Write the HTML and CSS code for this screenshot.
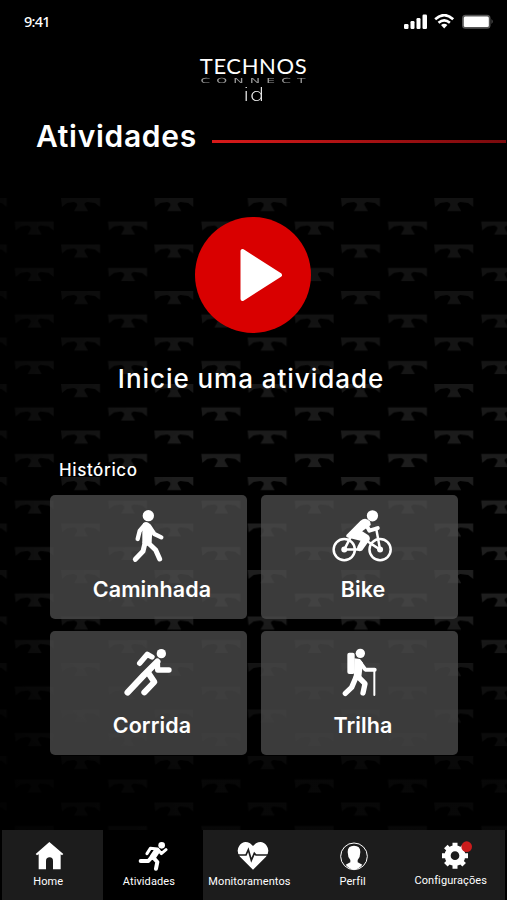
FILE: index.html
```html
<!DOCTYPE html>
<html lang="pt-BR">
<head>
    <meta charset="UTF-8">
    <title>Technos Connect ID - Atividades</title>
    <link rel="stylesheet" href="styles.css">
</head>
<body>
    <svg class="fundo" width="507" height="900" aria-hidden="true">
        <defs>
            <linearGradient id="fade" x1="0" y1="0" x2="0" y2="1">
                <stop offset="0.2" stop-color="#fff" stop-opacity="0.6"/>
                <stop offset="0.45" stop-color="#fff" stop-opacity="1"/>
                <stop offset="0.65" stop-color="#fff" stop-opacity="1"/>
                <stop offset="0.78" stop-color="#fff" stop-opacity="0.5"/>
                <stop offset="0.92" stop-color="#fff" stop-opacity="0.25"/>
            </linearGradient>
            <linearGradient id="lado">
                <stop offset="0" stop-color="#000" stop-opacity="0.6"/>
                <stop offset="0.35" stop-color="#000" stop-opacity="0"/>
            </linearGradient>
            <mask id="mascara">
                <rect y="190" width="507" height="640" fill="url(#fade)"/>
                <rect width="507" height="900" fill="url(#lado)"/>
            </mask>
            <pattern id="logos" x="61" y="197" width="93.3" height="46.5" patternUnits="userSpaceOnUse">
                <path d="M0 1H39V10L34 6L26 5Q22 6 24 9L27 14H13L16 9Q17 6 13 5L6 6L1 10Z" fill="#1e1e1e"/>
                <path transform="translate(47 23.5)" d="M0 1H39V10L34 6L26 5Q22 6 24 9L27 14H13L16 9Q17 6 13 5L6 6L1 10Z" fill="#1e1e1e"/>
            </pattern>
        </defs>
        <rect y="190" width="507" height="640" fill="url(#logos)" mask="url(#mascara)"/>
    </svg>

    <div class="app">
        <div class="status">
            <span class="hora">9:41</span>
            <svg width="90" height="18" viewBox="0 0 90 18" fill="#fff">
                <rect x="0" y="10" width="4.5" height="5" rx="1.2"/>
                <rect x="6.5" y="7" width="4" height="8" rx="1.2"/>
                <rect x="12.5" y="4" width="4" height="11" rx="1.2"/>
                <rect x="18.5" y="0.5" width="4.5" height="14.5" rx="1.2"/>
                <g fill="none" stroke="#fff" stroke-width="2.7">
                    <path d="M31.2 5.2Q40.2 -2.8 49.2 5.2"/>
                    <path d="M34.5 8.7Q40.2 4 45.9 8.7"/>
                </g>
                <path d="M37 11Q40.2 8.5 43.4 11L40.2 14.5Z"/>
                <rect x="58" y="0.7" width="28.5" height="14" rx="3.5" fill="#555"/>
                <rect x="59.8" y="2.5" width="25" height="10.5" rx="1.5"/>
                <path d="M87.5 5Q90 7.5 87.5 10Z" fill="#555"/>
            </svg>
        </div>

        <div class="logo">
            <span class="technos">TECHNOS</span>
            <span class="connect">CONNECT</span>
            <span class="id">id</span>
        </div>

        <div class="titulo">
            <h1>Atividades</h1>
            <div class="linha"></div>
        </div>

        <button class="play" aria-label="Iniciar">
            <svg width="117" height="117" viewBox="0 0 117 117">
                <circle cx="58" cy="58" r="58" fill="#d90000"/>
                <path d="M47.500 34V82L85 58Z" fill="#fff" stroke="#fff" stroke-width="4" stroke-linejoin="round"/>
            </svg>
        </button>
        <h2>Inicie uma atividade</h2>

        <h3>Histórico</h3>
        <div class="cards">
            <div class="card caminhada">
                <svg width="34" height="54" viewBox="0 0 102 162">
                    <circle cx="52" cy="20" r="17"/>
                    <path d="M36 43Q46 35 56 44L64 60L62 100Q58 112 44 110L34 102V70Z"/>
                    <g class="traco" stroke-width="13">
                        <path d="M40 49L26 66L20 90M55 52L70 75L91 85"/>
                        <path stroke-width="15" d="M43 98L36 127L13 151M52 102L74 123L86 150"/>
                    </g>
                </svg>
                <span>Caminhada</span>
            </div>
            <div class="card bike">
                <svg width="63" height="54" viewBox="0 0 190 162">
                    <circle cx="125" cy="20" r="17"/>
                    <path d="M47 77L89 35Q104 22 118 37L120 48L94 67L113 79Q123 90 110 102L94 125Q85 130 80 124Q76 120 80 112L89 95L52 86Q43 84 47 77Z"/>
                    <g class="traco" stroke-width="7.5">
                        <circle cx="40" cy="122" r="32"/>
                        <circle cx="148" cy="122" r="32"/>
                        <path d="M60 83L40 122H82M113 99L148 122L136 57"/>
                        <path stroke-width="12" d="M105 45L116 65L141 57"/>
                    </g>
                    <circle cx="40" cy="122" r="9"/>
                    <circle cx="148" cy="122" r="9"/>
                </svg>
                <span>Bike</span>
            </div>
            <div class="card corrida">
                <svg width="50" height="54" viewBox="0 -8 150 162">
                    <circle cx="115" cy="18" r="14"/>
                    <g class="traco" stroke-width="16">
                        <path d="M50 47L73 20L87 28"/>
                        <path stroke-width="19" d="M103 42L63 82L14 134"/>
                        <path d="M103 42L104 67H138"/>
                        <path stroke-width="18" d="M76 76L94 103L64 134"/>
                    </g>
                </svg>
                <span>Corrida</span>
            </div>
            <div class="card trilha">
                <svg width="37" height="54" viewBox="0 -8 111 162">
                    <circle cx="58" cy="17" r="14"/>
                    <rect x="19" y="15" width="22" height="64" rx="6"/>
                    <path d="M40 32L57 34L66 46L60 96L36 94L39 78Z"/>
                    <g class="traco" stroke-width="12">
                        <path d="M57 44L73 66H101"/>
                        <path stroke-width="16" d="M44 91L32 119L13 137M52 88L72 108L66 136"/>
                        <path stroke-width="6" d="M100 68V142"/>
                    </g>
                </svg>
                <span>Trilha</span>
            </div>
        </div>

        <nav class="menu">
            <div class="item home">
                <svg width="30" height="30" viewBox="0 0 90 90">
                    <path d="M43 3L85 39L81 43L77 40V85H54V60Q54 49 44 49Q33 49 33 60V85H11V40L6 43L2 39Z"/>
                </svg>
                <span>Home</span>
            </div>
            <div class="item ativo">
                <svg width="30" height="30" viewBox="0 0 90 90">
                    <circle cx="71" cy="13" r="10"/>
                    <g class="traco" stroke-width="9">
                        <path d="M27 38L37 22L59 24L70 38L84 26"/>
                        <path stroke-width="19" d="M55 32L45 47"/>
                        <path stroke-width="12" d="M40 50L31 60H8M46 50L58 63L54 83"/>
                    </g>
                </svg>
                <span>Atividades</span>
            </div>
            <div class="item monitor">
                <svg width="32" height="30" viewBox="0 0 96 90">
                    <path d="M48 86L9 47Q-4 30 7 14Q20 -4 39 7L48 15L57 7Q76 -4 89 14Q100 30 87 47Z"/>
                    <path d="M3 42H27L34 26L43 58L52 37L57 42H93" fill="none" stroke="#1c1c1c" stroke-width="5"/>
                </svg>
                <span>Monitoramentos</span>
            </div>
            <div class="item perfil">
                <svg width="30" height="30" viewBox="0 0 90 90">
                    <circle cx="45" cy="46" r="40" fill="none" stroke="#fff" stroke-width="3"/>
                    <path d="M26 33Q26 14 45 14Q64 14 64 33Q64 48 56 57V64L70 71Q59 85 45 85Q31 85 20 71L34 64V57Q26 48 26 33Z"/>
                </svg>
                <span>Perfil</span>
            </div>
            <div class="item config">
                <svg width="34" height="30" viewBox="-6 0 102 90">
                    <circle cx="45" cy="44" r="22" fill="none" stroke="#fff" stroke-width="18"/>
                    <path class="dentes" d="M45 5V17M45 71V83M6 44H18M72 44H84M17.5 16.5L27 26M63 62L72.5 71.5M72.5 16.5L63 26M27 62L17.5 71.5"/>
                    <circle cx="80" cy="17" r="16" fill="#cb1c1c"/>
                </svg>
                <span>Configurações</span>
            </div>
        </nav>
    </div>
</body>
</html>
```

FILE: styles.css
```css
body {
    margin: 0;
    background-color: #000;
    color: #fff;
    font-family: Inter, sans-serif;
}

.fundo {
    position: absolute;
    top: 0;
    left: 0;
    z-index: -1;
}

.app {
    display: flex;
    flex-direction: column;
    width: 507px;
    height: 900px;
    overflow: hidden;
}

.status {
    display: flex;
    justify-content: space-between;
    padding: 14px 13px 0 24px;
    height: 31px;
}

.hora {
    font: 500 14.5px/14px "Noto Sans", sans-serif;
    letter-spacing: -0.8px;
}

.logo {
    display: flex;
    flex-direction: column;
    align-items: center;
    height: 60px;
    padding-top: 10px;
}

.technos {
    font: 400 22px/22px Lato, sans-serif;
    letter-spacing: 0.6px;
}

.connect {
    font: 400 7px/9px "DejaVu Sans", sans-serif;
    letter-spacing: 3.1px;
    color: #999;
    transform: scaleX(1.98);
    margin-right: -5px;
}

.id {
    font: 200 17px/18px "DejaVu Sans", sans-serif;
    transform: scaleX(1.4);
}

.titulo {
    display: flex;
    align-items: center;
    height: 43px;
    padding-left: 36px;
}

h1 {
    margin: 0;
    font-size: 30px;
    font-weight: 600;
    line-height: 43px;
    width: 176px;
    letter-spacing: 0.7px;
}

.linha {
    flex: 1;
    height: 3px;
    margin: 10px 1px 0 0;
    background: linear-gradient(to right, #d91a1a, #7a0a0d);
}

.play {
    align-self: center;
    border: none;
    background: none;
    padding: 0;
    margin: 59px 1px 0 0;
    height: 117px;
    cursor: pointer;
}

.play svg {
    display: block;
}

h2 {
    margin: 25px 5px 0 0;
    font-size: 26px;
    font-weight: 500;
    line-height: 40px;
    text-align: center;
    letter-spacing: 0.95px;
}

h3 {
    margin: 59px 0 0 59px;
    font-size: 17px;
    font-weight: 500;
    line-height: 24px;
    letter-spacing: 0.6px;
}

.cards {
    display: grid;
    grid-template-columns: 197px 197px;
    grid-auto-rows: 124px;
    gap: 12px 14px;
    margin: 13px 0 0 49.5px;
}

.card {
    display: flex;
    flex-direction: column;
    align-items: center;
    background-color: rgba(78, 78, 78, 0.76);
    border-radius: 5px;
    padding-top: 14px;
    box-sizing: border-box;
    fill: #fff;
}

.card span {
    font-size: 21.5px;
    font-weight: 600;
    line-height: 28px;
    margin-top: 12px;
    padding-left: 8px;
    letter-spacing: 0.1px;
}

.bike svg {
    margin-left: 6px;
}

.traco {
    fill: none;
    stroke: #fff;
    stroke-linecap: round;
    stroke-linejoin: round;
}

.dentes {
    stroke: #fff;
    stroke-width: 15;
}

.menu {
    display: flex;
    height: 70px;
    margin: auto 2px 0;
    background-color: #1c1c1c;
}

.item {
    display: flex;
    flex-direction: column;
    align-items: center;
    flex: 1;
    padding-top: 11px;
    fill: #fff;
}

.item span {
    font: 400 11px/14px Roboto, sans-serif;
    letter-spacing: 0.1px;
    margin-top: 4px;
    padding-right: 8px;
}

.ativo {
    background-color: #000;
}

.home svg {
    margin-right: 5px;
}

.perfil span {
    padding-right: 3px;
}

.config span {
    margin-top: 3px;
}
```
